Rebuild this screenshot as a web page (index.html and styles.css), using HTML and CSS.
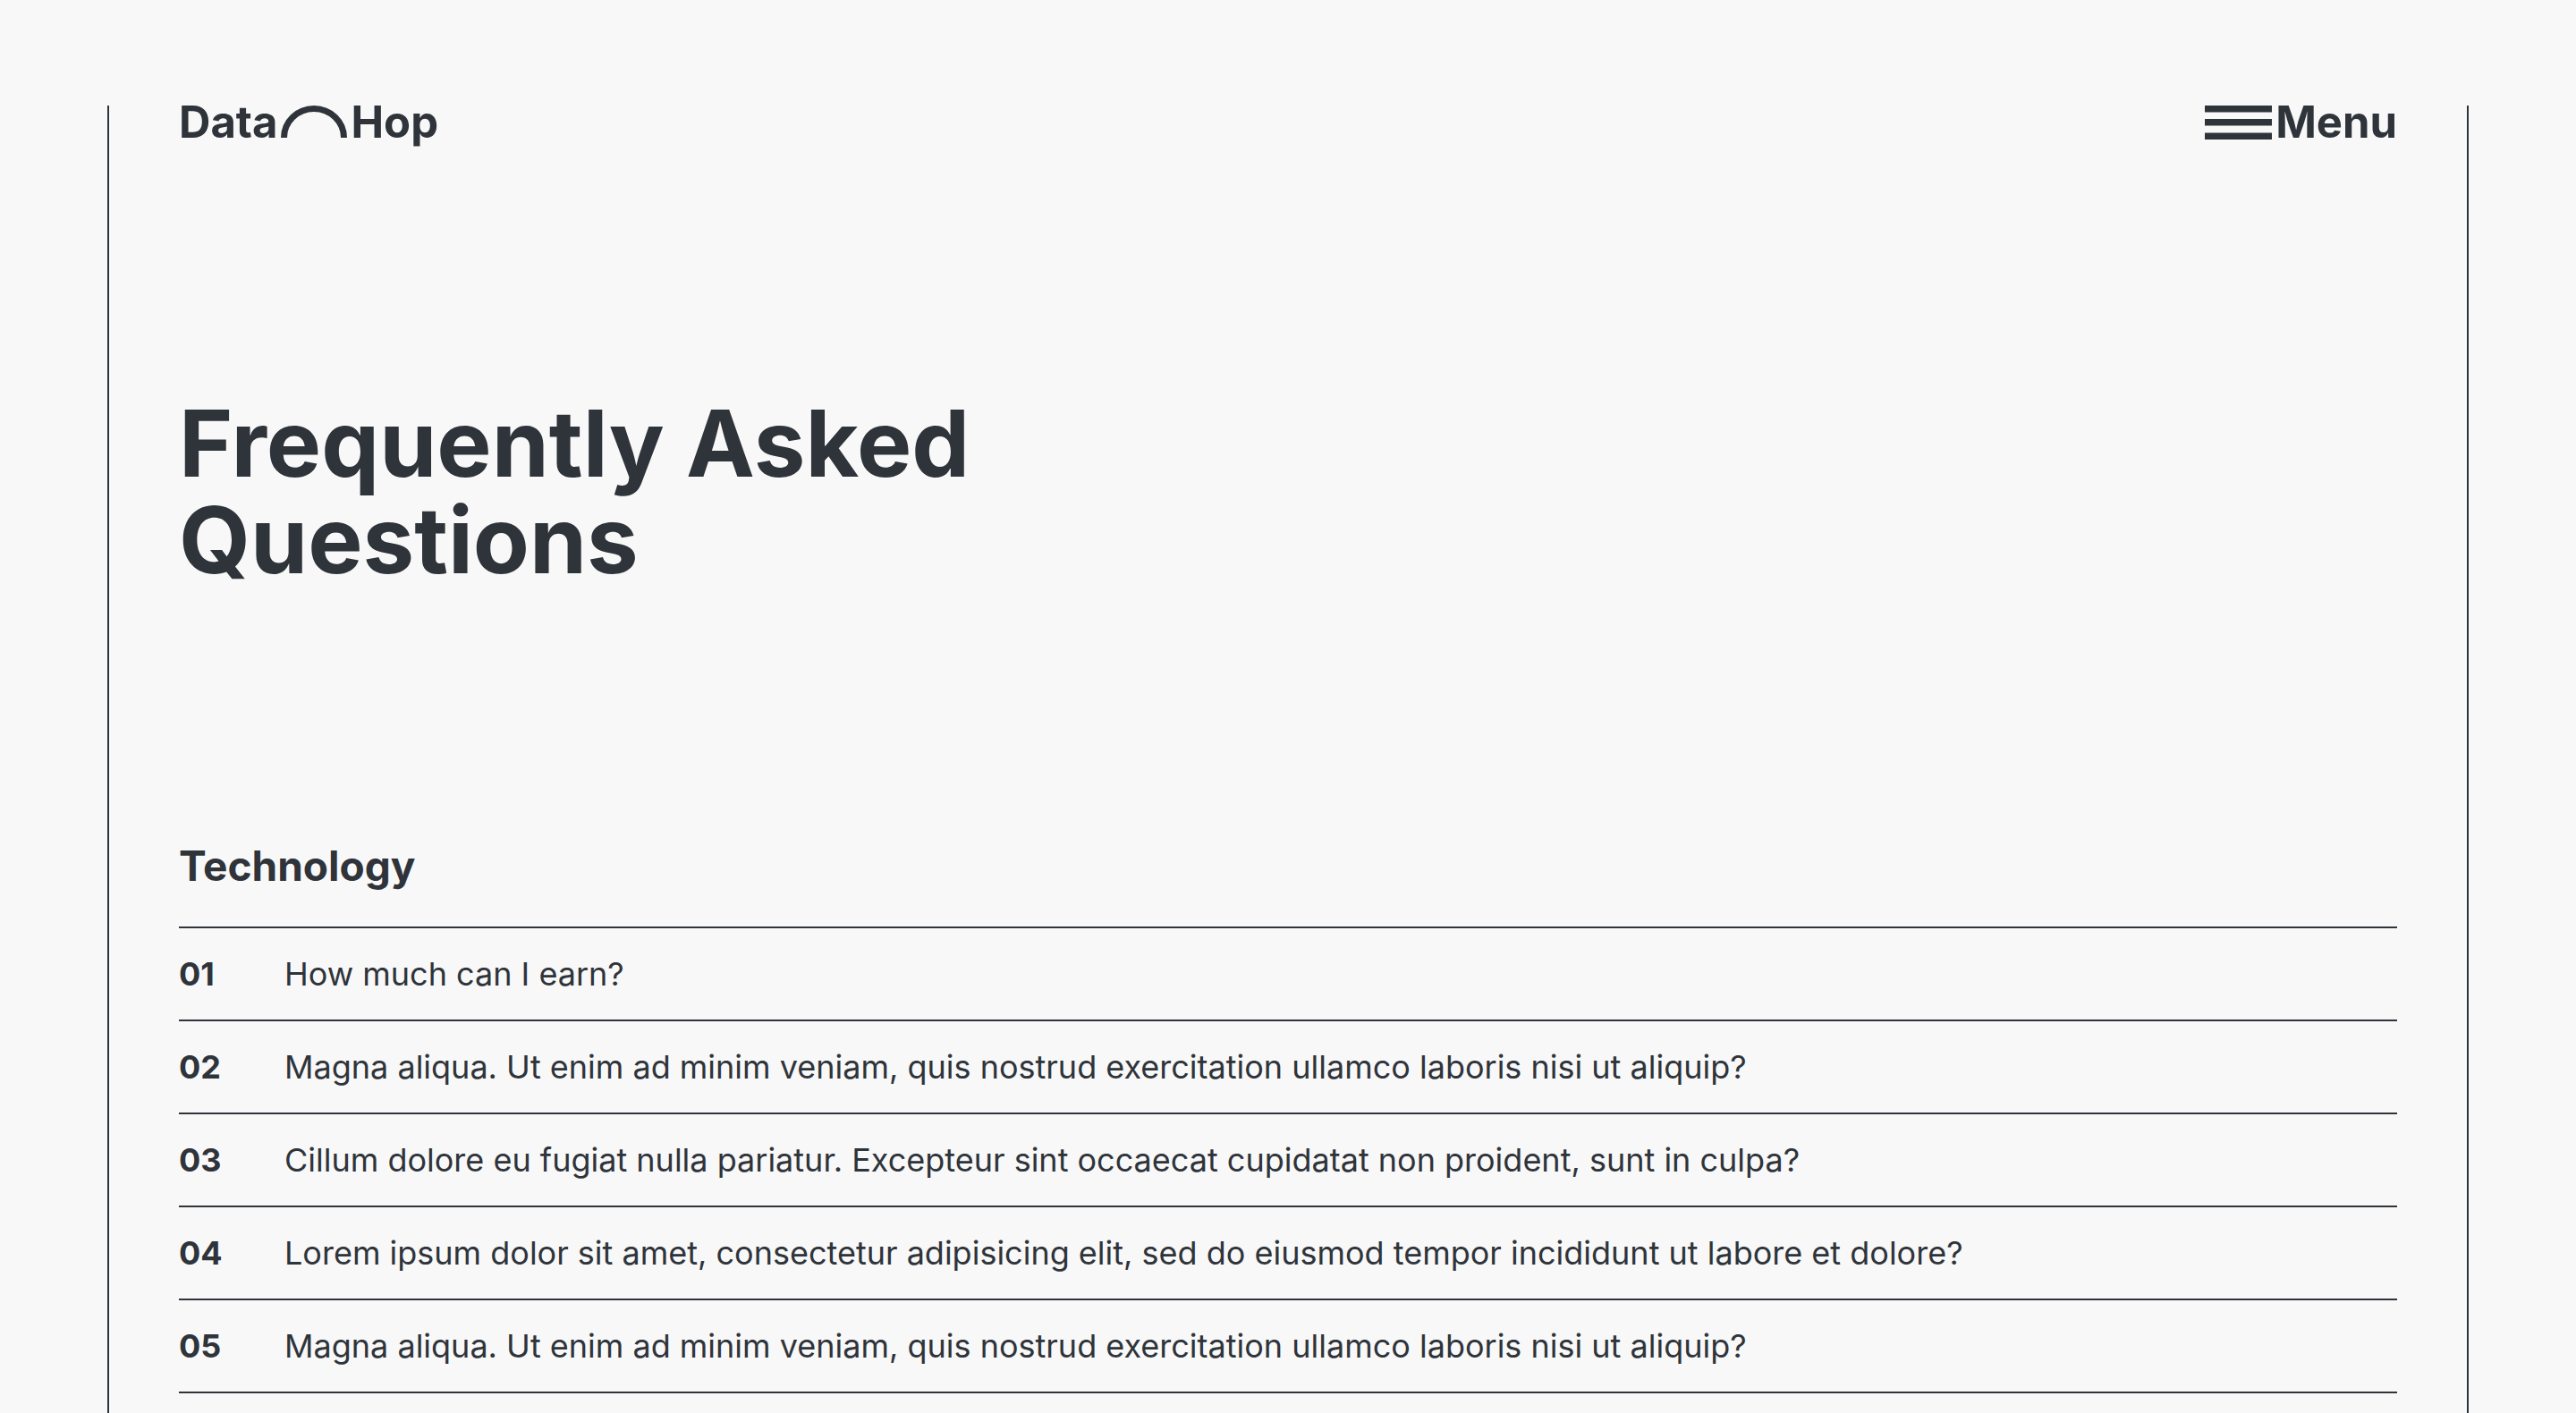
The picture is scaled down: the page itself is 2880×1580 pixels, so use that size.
FILE: index.html
```html
<!DOCTYPE html>
<html lang="en">
<head>
<meta charset="utf-8">
<meta name="viewport" content="width=device-width, initial-scale=1">
<title>Data Hop – Frequently Asked Questions</title>
<link rel="stylesheet" href="styles.css">
</head>
<body>
<div class="frame">
  <header class="header">
    <a class="logo" href="#" aria-label="Data Hop">
      <span>Data</span>
      <svg class="logo-arc" viewBox="0 0 74 36" aria-hidden="true"><path d="M3.500 36a33.500 32.500 0 0 1 67 0" fill="none" stroke="currentColor" stroke-width="7"/></svg>
      <span>Hop</span>
    </a>
    <button class="menu" type="button">
      <svg class="menu-icon" viewBox="0 0 75 38" aria-hidden="true"><path d="M0 0h75v7.500H0zM0 15h75v7.500H0zM0 30.500h75v7.500H0z" fill="currentColor"/></svg>
      <span>Menu</span>
    </button>
  </header>
  <main>
    <h1 class="title">Frequently Asked<br>Questions</h1>
    <section class="faq">
      <h2 class="faq-heading">Technology</h2>
      <ol class="faq-list">
        <li><a class="faq-item" href="#"><span class="number">01</span><span>How much can I earn?</span></a></li>
        <li><a class="faq-item" href="#"><span class="number">02</span><span>Magna aliqua. Ut enim ad minim veniam, quis nostrud exercitation ullamco laboris nisi ut aliquip?</span></a></li>
        <li><a class="faq-item" href="#"><span class="number">03</span><span>Cillum dolore eu fugiat nulla pariatur. Excepteur sint occaecat cupidatat non proident, sunt in culpa?</span></a></li>
        <li><a class="faq-item" href="#"><span class="number">04</span><span>Lorem ipsum dolor sit amet, consectetur adipisicing elit, sed do eiusmod tempor incididunt ut labore et dolore?</span></a></li>
        <li><a class="faq-item" href="#"><span class="number">05</span><span>Magna aliqua. Ut enim ad minim veniam, quis nostrud exercitation ullamco laboris nisi ut aliquip?</span></a></li>
      </ol>
    </section>
  </main>
</div>
</body>
</html>
```
FILE: styles.css
```css
*, *::before, *::after {
  box-sizing: border-box;
}

body {
  margin: 0;
  display: flex;
  flex-direction: column;
  min-height: 100vh;
  padding: 118px 120px 0;
  background: #f8f8f8;
  color: #2f343b;
  font-family: Inter, "Liberation Sans", sans-serif;
}

.frame {
  flex: 1;
  padding: 0 78px;
  border: solid currentColor;
  border-width: 0 2px;
}

.header {
  display: flex;
  justify-content: space-between;
  align-items: flex-start;
  height: 40px;
}

.logo,
.menu {
  display: flex;
  align-items: flex-start;
  gap: 4px;
  color: inherit;
  font-size: 49px;
  font-weight: 700;
  line-height: 38px;
  text-decoration: none;
}

.menu {
  padding: 0;
  border: 0;
  background: none;
  font-family: inherit;
}

.logo-arc {
  width: 74px;
  height: 36px;
}

.menu-icon {
  width: 75px;
  height: 38px;
}

.title {
  margin: 284px 0 0;
  font-size: 103px;
  font-weight: 700;
  line-height: 108px;
}

.faq {
  margin-top: 280px;
}

.faq-heading {
  margin: 0;
  font-size: 46px;
  font-weight: 700;
  line-height: 60px;
}

.faq-list {
  margin: 38px 0 0;
  padding: 0;
  list-style: none;
  border-top: 2px solid;
}

.faq-item {
  display: flex;
  padding: 27px 0;
  border-bottom: 2px solid;
  color: inherit;
  font-size: 36px;
  line-height: 48px;
  text-decoration: none;
}

.number {
  flex: none;
  width: 118px;
  font-weight: 700;
}
```
